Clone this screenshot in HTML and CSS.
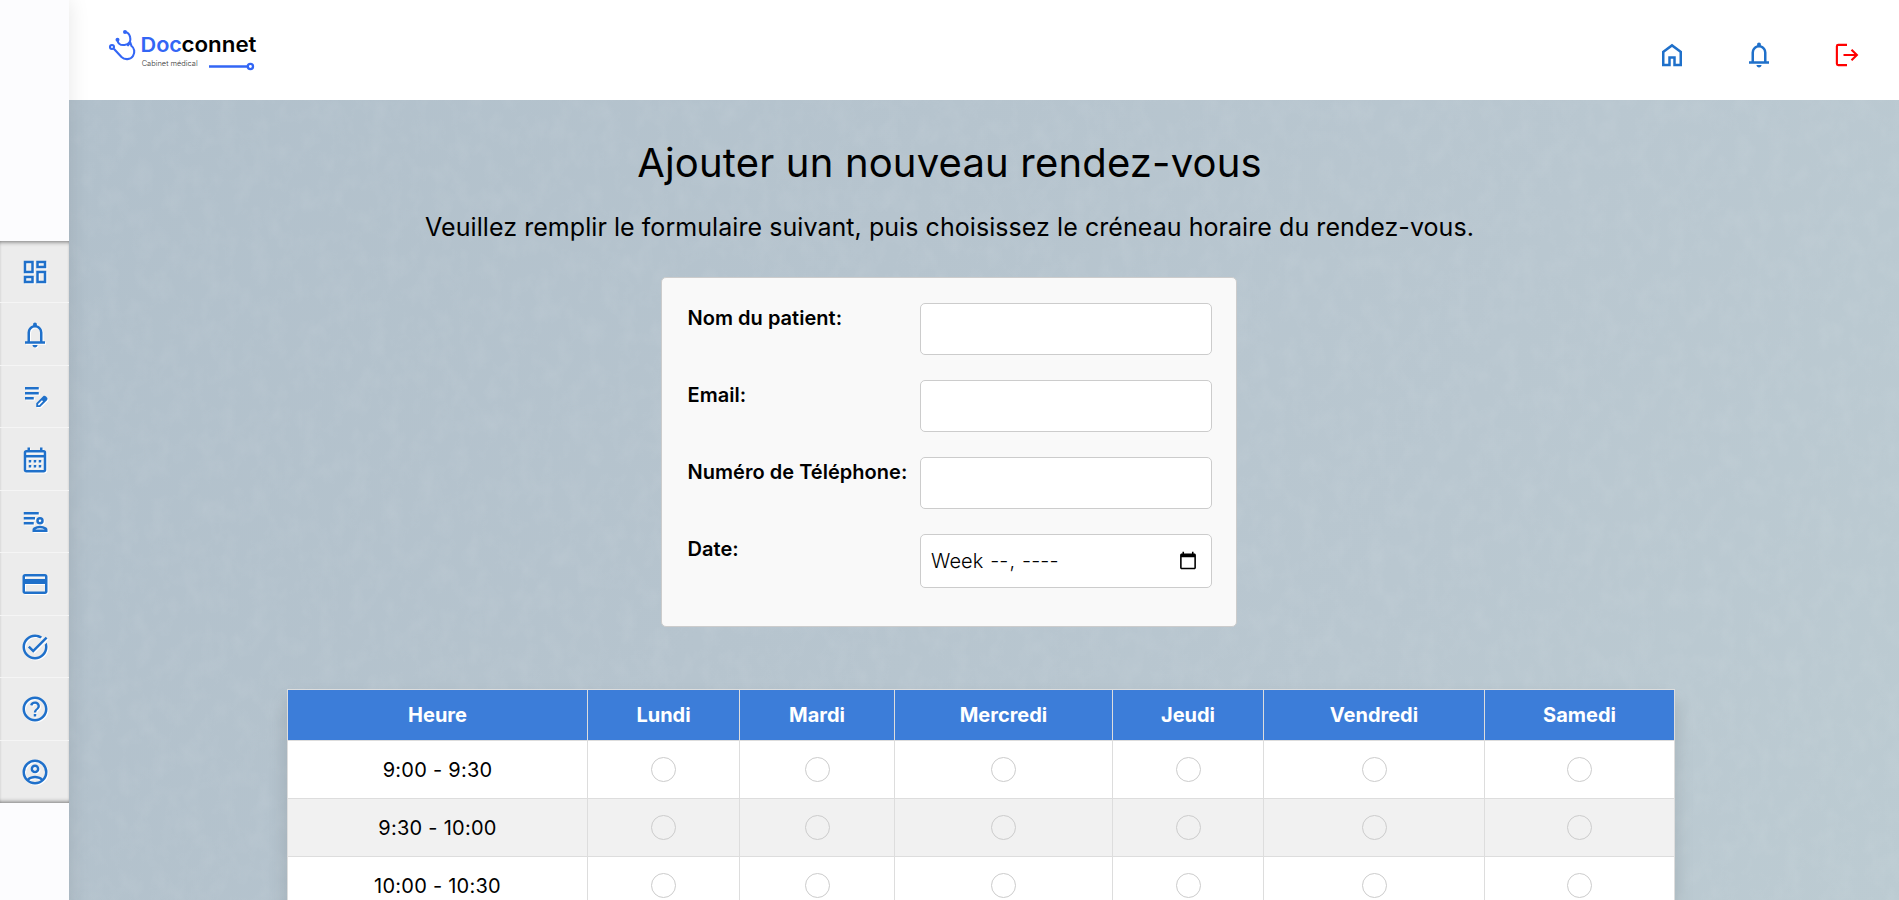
FILE: index.html
```html
<!DOCTYPE html>
<html lang="fr">
<head>
<meta charset="utf-8">
<title>Docconnet</title>
<link rel="stylesheet" href="styles.css">
</head>
<body>
<div class="app">
  <nav class="sidebar">
    <ul class="menu">
      <li class="menu-item"><svg class="icon" viewBox="0 0 24 24"><path d="M19 5v2h-4V5h4M9 5v6H5V5h4M19 13v6h-4v-6h4M9 17v2H5v-2h4M21 3h-8v6h8V3zM11 3H3v10h8V3zM21 11h-8v10h8V11zM11 15H3v6h8v-6z"/></svg></li>
      <li class="menu-item"><svg class="icon" viewBox="0 0 24 24"><path d="M4 19v-2h2v-7q0-2.075 1.25-3.688Q8.5 4.7 10.5 4.2v-.7q0-.625.438-1.062Q11.375 2 12 2t1.062.438Q13.5 2.875 13.5 3.5v.7q2 .5 3.25 2.112Q18 7.925 18 10v7h2v2Zm8 3q-.825 0-1.412-.587Q10 20.825 10 20h4q0 .825-.587 1.413Q12.825 22 12 22Zm-4-5h8v-7q0-1.65-1.175-2.825Q13.65 6 12 6q-1.65 0-2.825 1.175Q8 8.35 8 10Z"/></svg></li>
      <li class="menu-item"><svg class="icon" viewBox="0 0 24 24"><path d="M4 14v-2h7v2Zm0-4V8h11v2Zm0-4V4h11v2Zm9 14v-3.075l5.525-5.5q.225-.225.5-.325.275-.1.55-.1.3 0 .575.113.275.112.5.337l.925.925q.2.225.312.5.113.275.113.55 0 .275-.1.562-.1.288-.325.513l-5.5 5.5Zm1.500-1.500h.95l3.025-3.05-.45-.475-.475-.45-3.05 3.025Z"/></svg></li>
      <li class="menu-item"><svg class="icon" viewBox="0 0 24 24"><path d="M5 22q-.825 0-1.413-.587Q3 20.825 3 20V6q0-.825.587-1.412Q4.175 4 5 4h1V2h2v2h8V2h2v2h1q.825 0 1.413.588Q21 5.175 21 6v14q0 .825-.587 1.413Q19.825 22 19 22ZM5 20h14V10H5ZM5 8h14V6H5Z" fill-rule="evenodd"/><path d="M7 12h2v2H7zM11 12h2v2h-2zM15 12h2v2h-2zM7 16h2v2H7zM11 16h2v2h-2zM15 16h2v2h-2z"/></svg></li>
      <li class="menu-item"><svg class="icon" viewBox="0 0 24 24"><path d="M3 4h12v2H3zM3 8h9v2H3zM3 12h8v2H3z"/><path fill-rule="evenodd" d="M16 14a3 3 0 1 1 0-6 3 3 0 0 1 0 6Zm0-2a1 1 0 1 0 0-2 1 1 0 0 0 0 2ZM10 20v-1.900q0-.5.260-.950.260-.450.740-.700Q13.200 15 16 15t5 1.450q.480.250.740.700.260.450.260.950V20Zm2.150-2h7.700Q18 17 16 17t-3.850 1Z"/></svg></li>
      <li class="menu-item"><svg class="icon" viewBox="0 0 24 24"><path d="M20 4H4c-1.110 0-2 .89-2 2v12c0 1.110.89 2 2 2h16c1.110 0 2-.89 2-2V6c0-1.110-.89-2-2-2zm0 14H4v-6h16v6zm0-10H4V6h16v2z"/></svg></li>
      <li class="menu-item"><svg class="icon" viewBox="0 0 24 24"><path d="M22 5.180 10.590 16.600l-4.240-4.240 1.410-1.410 2.830 2.830 10-10L22 5.180zM19.790 10.220C19.920 10.790 20 11.390 20 12c0 4.420-3.580 8-8 8s-8-3.580-8-8c0-4.420 3.580-8 8-8 1.580 0 3.040.46 4.280 1.250l1.440-1.440C16.100 2.670 14.130 2 12 2 6.480 2 2 6.480 2 12s4.480 10 10 10 10-4.480 10-10c0-1.190-.22-2.330-.6-3.390L19.790 10.220z"/></svg></li>
      <li class="menu-item"><svg class="icon" viewBox="0 0 24 24"><path d="M11 18h2v-2h-2v2zm1-16C6.480 2 2 6.480 2 12s4.480 10 10 10 10-4.480 10-10S17.520 2 12 2zm0 18c-4.410 0-8-3.590-8-8s3.590-8 8-8 8 3.590 8 8-3.590 8-8 8zm0-14c-2.210 0-3.500 1.300-3.900 2.700l1.800.7c.2-.9 1-1.600 2.100-1.600s2 .9 2 1.900c0 2-2.900 2.300-2.900 5.100h1.900c0-2.250 2.900-2.500 2.900-5.200C15.900 7.600 14.210 6 12 6z"/></svg></li>
      <li class="menu-item"><svg class="icon" viewBox="0 0 24 24"><path d="M5.850 17.100q1.275-.975 2.850-1.538Q10.275 15 12 15q1.725 0 3.300.562 1.575.563 2.850 1.538.875-1.025 1.363-2.325Q20 13.475 20 12q0-3.325-2.337-5.663Q15.325 4 12 4T6.338 6.337Q4 8.675 4 12q0 1.475.487 2.775.488 1.300 1.363 2.325ZM12 13q-1.475 0-2.488-1.012Q8.500 10.975 8.500 9.500t1.012-2.488Q10.525 6 12 6t2.488 1.012Q15.500 8.025 15.500 9.500t-1.012 2.488Q13.475 13 12 13Zm0 9q-2.075 0-3.900-.788-1.825-.787-3.175-2.137-1.350-1.350-2.137-3.175Q2 14.075 2 12t.788-3.900q.787-1.825 2.137-3.175 1.350-1.350 3.175-2.138Q9.925 2 12 2t3.900.787q1.825.788 3.175 2.138 1.350 1.350 2.137 3.175Q22 9.925 22 12t-.788 3.900q-.787 1.825-2.137 3.175-1.350 1.350-3.175 2.137Q14.075 22 12 22Zm0-2q1.325 0 2.500-.387 1.175-.388 2.150-1.113-.975-.725-2.150-1.113Q13.325 17 12 17t-2.500.387q-1.175.388-2.150 1.113.975.725 2.150 1.113Q10.675 20 12 20Zm0-9q.650 0 1.075-.425.425-.425.425-1.075 0-.650-.425-1.075Q12.650 8 12 8q-.650 0-1.075.425Q10.500 8.850 10.500 9.500q0 .650.425 1.075Q11.350 11 12 11Z"/></svg></li>
    </ul>
  </nav>
  <div class="page">
    <header class="topbar">
      <svg class="logo" viewBox="105 25 155 50" width="155" height="50">
        <g fill="none" stroke="#3366f5" stroke-width="2.100" stroke-linecap="round">
          <path d="M117.600 40.500C118 44 121 45.300 124.500 45C129.500 44.500 131 41 130.200 37.500C129.600 34.500 128 32.500 125.500 32"/>
          <path d="M128 45.300L130.300 42.500L131.500 46C134.500 48 135.200 52.500 133 56C130.500 60 124.500 60 121.500 57L114.300 49.300"/>
          <circle cx="112" cy="47" r="2"/>
          <path d="M209 66.500H247" stroke-width="2.500" stroke-linecap="butt"/>
          <circle cx="250.400" cy="66.500" r="2.600" stroke-width="2.300"/>
        </g>
        <g fill="#3366f5"><circle cx="117.500" cy="39.800" r="2"/><circle cx="125" cy="32" r="2"/></g>
        <text class="logo-name doc" x="140.500" y="52" textLength="41.500" lengthAdjust="spacingAndGlyphs">Doc</text>
        <text class="logo-name" x="181.500" y="52" textLength="75" lengthAdjust="spacingAndGlyphs">connet</text>
        <text class="logo-tag" x="141.700" y="65.500" textLength="56" lengthAdjust="spacingAndGlyphs">Cabinet médical</text>
      </svg>
      <div class="actions">
        <svg class="icon" viewBox="0 0 24 24"><path d="M6 19h3v-6h6v6h3v-9l-6-4.500L6 10Zm-2 2V9l8-6 8 6v12h-7v-6h-2v6Z"/></svg>
        <svg class="icon" viewBox="0 0 24 24"><path d="M4 19v-2h2v-7q0-2.075 1.250-3.688Q8.500 4.700 10.500 4.200v-.7q0-.625.438-1.062Q11.375 2 12 2t1.062.438Q13.500 2.875 13.500 3.500v.7q2 .5 3.250 2.112Q18 7.925 18 10v7h2v2Zm8 3q-.825 0-1.412-.587Q10 20.825 10 20h4q0 .825-.587 1.413Q12.825 22 12 22Zm-4-5h8v-7q0-1.650-1.175-2.825Q13.650 6 12 6q-1.650 0-2.825 1.175Q8 8.350 8 10Z"/></svg>
        <svg class="icon logout" viewBox="0 0 24 24"><path d="M12 3.900H5Q3.900 3.900 3.900 5V19Q3.900 20.100 5 20.100H12M9.200 12H20M15.600 7.800 19.900 12l-4.300 4.200"/></svg>
      </div>
    </header>
    <main class="content">
      <svg class="texture" width="100%" height="100%">
        <filter id="fabric" x="0" y="0" width="100%" height="100%">
          <feTurbulence type="fractalNoise" baseFrequency="0.060 0.045" numOctaves="3" seed="4"/>
          <feColorMatrix values="0 0 0 0 1  0 0 0 0 1  0 0 0 0 1  .9 0 0 0 -.36"/>
        </filter>
        <rect width="100%" height="100%" filter="url(#fabric)"/>
      </svg>
      <h1 class="title">Ajouter un nouveau rendez-vous</h1>
      <p class="subtitle">Veuillez remplir le formulaire suivant, puis choisissez le créneau horaire du rendez-vous.</p>
      <form class="form">
        <label for="nom">Nom du patient:</label><input id="nom" type="text">
        <label for="email">Email:</label><input id="email" type="email">
        <label for="tel">Numéro de Téléphone:</label><input id="tel" type="tel">
        <label for="date">Date:</label><input id="date" class="week" type="week" lang="en">
      </form>
      <table class="slots">
        <colgroup><col class="c-heure"><col class="c-lun"><col class="c-mar"><col class="c-mer"><col class="c-jeu"><col class="c-ven"><col class="c-sam"></colgroup>
        <thead><tr><th>Heure</th><th>Lundi</th><th>Mardi</th><th>Mercredi</th><th>Jeudi</th><th>Vendredi</th><th>Samedi</th></tr></thead>
        <tbody>
          <tr><td>9:00 - 9:30</td><td><i class="radio"></i></td><td><i class="radio"></i></td><td><i class="radio"></i></td><td><i class="radio"></i></td><td><i class="radio"></i></td><td><i class="radio"></i></td></tr>
          <tr><td>9:30 - 10:00</td><td><i class="radio"></i></td><td><i class="radio"></i></td><td><i class="radio"></i></td><td><i class="radio"></i></td><td><i class="radio"></i></td><td><i class="radio"></i></td></tr>
          <tr><td>10:00 - 10:30</td><td><i class="radio"></i></td><td><i class="radio"></i></td><td><i class="radio"></i></td><td><i class="radio"></i></td><td><i class="radio"></i></td><td><i class="radio"></i></td></tr>
        </tbody>
      </table>
    </main>
  </div>
</div>
</body>
</html>
```
FILE: styles.css
```css
* { box-sizing: border-box; }
body { margin: 0; font-family: Inter, sans-serif; font-size: 20px; color: #000; }
.app { display: grid; grid-template-columns: 69px minmax(0, 1fr); height: 100vh; overflow: hidden; }
.sidebar { display: flex; flex-direction: column; padding-top: 241px; background: #fcfcfe; box-shadow: 0 0 20px rgba(0, 0, 0, .1); position: relative; z-index: 2; }
.menu { list-style: none; margin: 0; padding: 0; height: 562px; display: grid; grid-template-rows: repeat(9, 1fr); background: #ececec; box-shadow: inset 0 4px 4px -3px rgba(0, 0, 0, .5), inset 0 -4px 4px -3px rgba(0, 0, 0, .5); }
.menu-item { display: flex; align-items: center; justify-content: center; padding: 1px 0 0 1px; border-bottom: 1px solid #f5f5f5; }
.menu-item:last-child { border-bottom: 0; }
.icon { width: 30px; height: 30px; fill: #1f70ca; }
.menu .icon { filter: drop-shadow(1px 1px 0 #fff); }
.page { display: flex; flex-direction: column; min-width: 0; }
.topbar { flex: none; height: 100px; background: #fff; display: flex; justify-content: space-between; padding: 25px 37.5px 0 36px; }
.logo { flex: none; }
.logo-name { font-size: 20.5px; font-weight: 600; fill: #000; }
.logo-name.doc { fill: #3366f5; }
.logo-tag { font-size: 7px; font-weight: 300; fill: #333; }
.actions { display: flex; gap: 57.5px; padding-top: 15px; }
.icon.logout { fill: none; stroke: #f00; stroke-width: 1.7; }
.content { flex: 1; min-height: 0; position: relative; z-index: 0; display: flex; flex-direction: column; align-items: center; padding: 38px 69px 0 0; background: linear-gradient(115deg, #b1c0cb 0%, #b6c4ce 40%, #b9c7d0 70%, #bccbd2 100%); }
.texture { position: absolute; inset: 0; z-index: -1; opacity: .13; }
.title { margin: 0; font-size: 40px; line-height: 50px; font-weight: 400; letter-spacing: .18px; }
.subtitle { margin: 22px 0 0; font-size: 25px; line-height: 34px; letter-spacing: .06px; }
.form { flex: none; width: 576px; height: 350px; margin: 33px 1px 0 0; padding: 25px 24px 25px 25px; display: grid; grid-template-columns: 1fr 292px; grid-template-rows: 52px 52px 52px 54px; row-gap: 25px; background: #f9f9f9; border: 1px solid #ccc; border-radius: 5px; }
.form label { font-weight: 600; line-height: 30px; letter-spacing: .03px; padding-left: .5px; }
.form input { width: 100%; height: 100%; margin: 0; padding: 10px; border: 1px solid #ccc; border-radius: 5px; background: #fff; font: 20px Inter, sans-serif; color: #000; outline: 0; }
.form .week { font-weight: 300; letter-spacing: .1px; padding-right: 11px; }
.slots { flex: none; align-self: flex-start; margin: 62px 0 0 218px; width: 1388px; table-layout: fixed; border-collapse: collapse; text-align: center; background: #fff; box-shadow: 0 12px 18px rgba(0, 0, 0, .13); }
.slots th, .slots td { border: 1px solid #ddd; padding: 0; }
.slots th { height: 51px; background: #3c7dd9; color: #fff; font-weight: 700; }
.slots td { height: 58px; letter-spacing: .25px; }
.slots tbody tr:nth-child(even) { background: #f1f1f1; }
.c-heure { width: 300px; } .c-lun { width: 152px; } .c-mar { width: 155px; } .c-mer { width: 218px; } .c-jeu { width: 151px; } .c-ven { width: 221px; } .c-sam { width: 190px; }
.radio { display: block; width: 25px; height: 25px; margin: 0 auto; border: 1px solid #ccc; border-radius: 50%; }
```
